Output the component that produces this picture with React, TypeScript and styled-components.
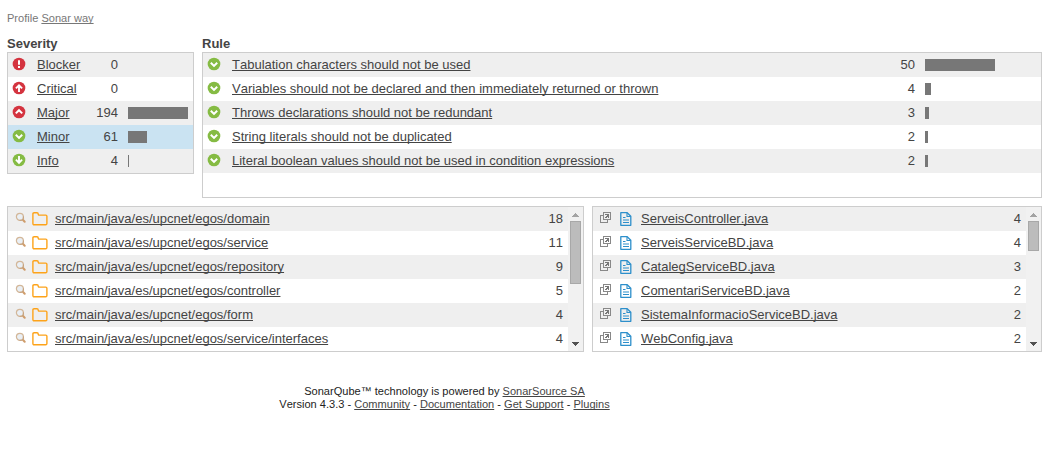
import React from "react";
import styled, { createGlobalStyle } from "styled-components";

const Global = createGlobalStyle`
  * { box-sizing: border-box; }
  body {
    margin: 0;
    background: #fff;
    color: #444;
    font-family: "Liberation Sans", Arial, sans-serif;
    font-size: 13px;
    font-kerning: none;
    overflow: hidden;
  }
`;

const Page = styled.main`
  width: 1042px;
  height: 459px;
  padding: 11px 0 0 7px;
`;

const Link = styled.a`
  color: inherit;
  text-decoration: underline;
  text-decoration-thickness: 1px;
  text-underline-offset: 1px;
  text-decoration-skip-ink: none;
  cursor: pointer;
`;

const Profile = styled.p`
  margin: 0 0 11px;
  height: 14px;
  line-height: 14px;
  font-size: 11.05px;
  color: #777;
`;

const Columns = styled.div<{ $template: string }>`
  display: grid;
  grid-template-columns: ${(p) => p.$template};
  column-gap: 8px;
  margin-bottom: 8px;
  align-items: start;
`;

const Heading = styled.h2`
  margin: 0;
  height: 16px;
  line-height: 16px;
  font-size: 13px;
  font-weight: bold;
`;

const Panel = styled.div<{ $height?: number }>`
  display: flex;
  border: 1px solid #cdcdcd;
  ${(p) => (p.$height ? `height: ${p.$height}px;` : "")}
  overflow: hidden;
`;

const Rows = styled.div`
  flex: 1;
  min-width: 0;
`;

const Row = styled.div<{ $selected?: boolean }>`
  display: flex;
  align-items: center;
  height: 24px;
  line-height: 24px;
  background: #fff;
  &:nth-child(odd) { background: #efefef; }
  ${(p) => (p.$selected ? "&&& { background: #cae3f2; }" : "")}
`;

const StatusCell = styled.span`
  display: flex;
  flex: none;
  width: 29px;
  padding: 0 0 2px 4px;
`;

const Label = styled.span`
  flex: 1;
  white-space: nowrap;
`;

const Count = styled.span`
  flex: none;
  text-align: right;
`;

const BarCell = styled.span<{ $width: number }>`
  flex: none;
  display: flex;
  width: ${(p) => p.$width}px;
  padding-left: 10px;
`;

const Bar = styled.span`
  height: 12px;
  background: #777;
`;

const ToolCell = styled.span`
  display: flex;
  flex: none;
  width: 24px;
  padding: 0 0 2px 7px;
`;

const KindCell = styled.span<{ $width: number; $indent?: number }>`
  display: flex;
  flex: none;
  width: ${(p) => p.$width}px;
  padding-left: ${(p) => p.$indent ?? 0}px;
`;

const ResourceCount = styled(Count)`
  padding-right: 5px;
`;

const Scrollbar = styled.div`
  flex: none;
  display: flex;
  flex-direction: column;
  align-items: center;
  width: 15px;
  background: #f1f1f1;
`;

const Thumb = styled.div<{ $height: number }>`
  width: 11px;
  height: ${(p) => p.$height}px;
  background: #bcbcbc;
  border: 1px solid #a8a8a8;
`;

const ScrollButton = styled.div<{ $end?: boolean }>`
  height: 14px;
  display: flex;
  align-items: center;
  padding-top: ${(p) => (p.$end ? 0 : 2)}px;
`;

const Spacer = styled.div`
  flex: 1;
`;

const Footer = styled.footer`
  width: 875px;
  margin-top: 33px;
  text-align: center;
  font-size: 11.05px;
  line-height: 13px;
  color: #222;
  ${Link} { color: #444; }
`;

type Level = "blocker" | "critical" | "major" | "minor" | "info";

const glyphs: Record<Level, React.ReactNode> = {
  blocker: <path d="M7 3.2v4.6M7 9v1.9" strokeWidth="2" />,
  critical: <path d="M7 11V4.6M3.9 7.4L7 4.3l3.1 3.1" strokeWidth="1.9" />,
  major: <path d="M3.8 8.4L7 5.2l3.2 3.2" strokeWidth="2" />,
  minor: <path d="M3.8 5.7L7 8.9l3.2-3.2" strokeWidth="2" />,
  info: <path d="M7 3v6.5M3.9 6.7L7 9.8l3.1-3.1" strokeWidth="1.9" />,
};

const StatusIcon = ({ level }: { level: Level }) => (
  <svg width="14" height="14" viewBox="0 0 14 14" fill="none" stroke="#fff">
    <circle cx="7" cy="7" r="6.35" stroke="none" fill={level === "minor" || level === "info" ? "#85bb43" : "#d4333f"} />
    {glyphs[level]}
  </svg>
);

const Magnifier = () => (
  <svg width="12" height="12" viewBox="0 0 12 12" fill="none">
    <path d="M7.6 7.6l2.1 2.1" stroke="#cf9d6c" strokeWidth="2.1" strokeLinecap="round" />
    <circle cx="4.9" cy="4.8" r="3.5" fill="#e9eff5" stroke="#d3b799" strokeWidth="1.2" />
    <path d="M8.4 4.4v2.4L6.9 8.3H4.6" stroke="#c4a07b" />
  </svg>
);

const Folder = () => (
  <svg width="16" height="14" viewBox="0 0 16 14" fill="none" stroke="#fda31a" strokeWidth="1.4">
    <path d="M.9 11.5V2Q.9.8 2.1.8H5Q6.2.8 6.2 2T7.4 3.1H13.7Q14.9 3.1 14.9 4.3V11.5Q14.9 12.7 13.7 12.7H2.1Q.9 12.7.9 11.5Z" />
  </svg>
);

const OpenWindow = () => (
  <svg width="12" height="12" viewBox="0 0 12 12" fill="none" stroke="#888" shapeRendering="crispEdges">
    <path d="M3.5.5h7v7h-7zM3 3.5H.5v7h7V8" />
    <path d="M5 2h4v4H8V5H7v1H5V5h1V4h1V3H5z" fill="#777" stroke="none" />
  </svg>
);

const FileIcon = () => (
  <svg width="12" height="14" viewBox="0 0 12 14" fill="none" stroke="#2d8fcb" strokeWidth="1.3">
    <path d="M.8.7h6.4l3.6 3.6v9H.8z" strokeLinejoin="round" />
    <path d="M7 .7v3.8h3.8" strokeWidth="1.1" />
    <path d="M3 5.5h2.5M3 8h6M3 10.5h6" strokeWidth="1.1" />
  </svg>
);

const Scroll = ({ thumb }: { thumb: number }) => (
  <Scrollbar>
    <ScrollButton>
      <svg width="7" height="4" viewBox="0 0 7 4" shapeRendering="crispEdges">
        <path d="M3 0h1v1h1v1h1v1h1v1H0V3h1V2h1V1h1z" fill="#a3a3a3" />
      </svg>
    </ScrollButton>
    <Thumb $height={thumb} />
    <Spacer />
    <ScrollButton $end>
      <svg width="7" height="4" viewBox="0 0 7 4" shapeRendering="crispEdges">
        <path d="M0 0h7v1H6v1H5v1H4v1H3V3H2V2H1V1H0z" fill="#505050" />
      </svg>
    </ScrollButton>
  </Scrollbar>
);

const severities: { level: Level; name: string; count: number; bar: number }[] = [
  { level: "blocker", name: "Blocker", count: 0, bar: 0 },
  { level: "critical", name: "Critical", count: 0, bar: 0 },
  { level: "major", name: "Major", count: 194, bar: 60 },
  { level: "minor", name: "Minor", count: 61, bar: 19 },
  { level: "info", name: "Info", count: 4, bar: 1 },
];

const rules: [string, number, number][] = [
  ["Tabulation characters should not be used", 50, 70],
  ["Variables should not be declared and then immediately returned or thrown", 4, 6],
  ["Throws declarations should not be redundant", 3, 4],
  ["String literals should not be duplicated", 2, 3],
  ["Literal boolean values should not be used in condition expressions", 2, 3],
];

const folders: [string, number][] = [
  ["domain", 18],
  ["service", 11],
  ["repository", 9],
  ["controller", 5],
  ["form", 4],
  ["service/interfaces", 4],
];

const files: [string, number][] = [
  ["ServeisController.java", 4],
  ["ServeisServiceBD.java", 4],
  ["CatalegServiceBD.java", 3],
  ["ComentariServiceBD.java", 2],
  ["SistemaInformacioServiceBD.java", 2],
  ["WebConfig.java", 2],
];

export default function App() {
  return (
    <Page>
      <Global />
      <Profile>
        Profile <Link>Sonar way</Link>
      </Profile>
      <Columns $template="187px 840px">
        <section>
          <Heading>Severity</Heading>
          <Panel>
            <Rows>
              {severities.map((s) => (
                <Row key={s.level} $selected={s.level === "minor"}>
                  <StatusCell><StatusIcon level={s.level} /></StatusCell>
                  <Label><Link>{s.name}</Link></Label>
                  <Count>{s.count}</Count>
                  <BarCell $width={75}><Bar style={{ width: s.bar }} /></BarCell>
                </Row>
              ))}
            </Rows>
          </Panel>
        </section>
        <section>
          <Heading>Rule</Heading>
          <Panel $height={146}>
            <Rows>
              {rules.map(([name, count, bar]) => (
                <Row key={name}>
                  <StatusCell><StatusIcon level="minor" /></StatusCell>
                  <Label><Link>{name}</Link></Label>
                  <Count>{count}</Count>
                  <BarCell $width={126}><Bar style={{ width: bar }} /></BarCell>
                </Row>
              ))}
            </Rows>
          </Panel>
        </section>
      </Columns>
      <Columns $template="577px 450px">
        <Panel $height={146}>
          <Rows>
            {folders.map(([name, count]) => (
              <Row key={name}>
                <ToolCell><Magnifier /></ToolCell>
                <KindCell $width={23}><Folder /></KindCell>
                <Label><Link>src/main/java/es/upcnet/egos/{name}</Link></Label>
                <ResourceCount>{count}</ResourceCount>
              </Row>
            ))}
          </Rows>
          <Scroll thumb={63} />
        </Panel>
        <Panel $height={146}>
          <Rows>
            {files.map(([name, count]) => (
              <Row key={name}>
                <ToolCell><OpenWindow /></ToolCell>
                <KindCell $width={24} $indent={3}><FileIcon /></KindCell>
                <Label><Link>{name}</Link></Label>
                <ResourceCount>{count}</ResourceCount>
              </Row>
            ))}
          </Rows>
          <Scroll thumb={30} />
        </Panel>
      </Columns>
      <Footer>
        SonarQube™ technology is powered by <Link>SonarSource SA</Link>
        <br />
        Version 4.3.3 - <Link>Community</Link> - <Link>Documentation</Link> - <Link>Get Support</Link> - <Link>Plugins</Link>
      </Footer>
    </Page>
  );
}
